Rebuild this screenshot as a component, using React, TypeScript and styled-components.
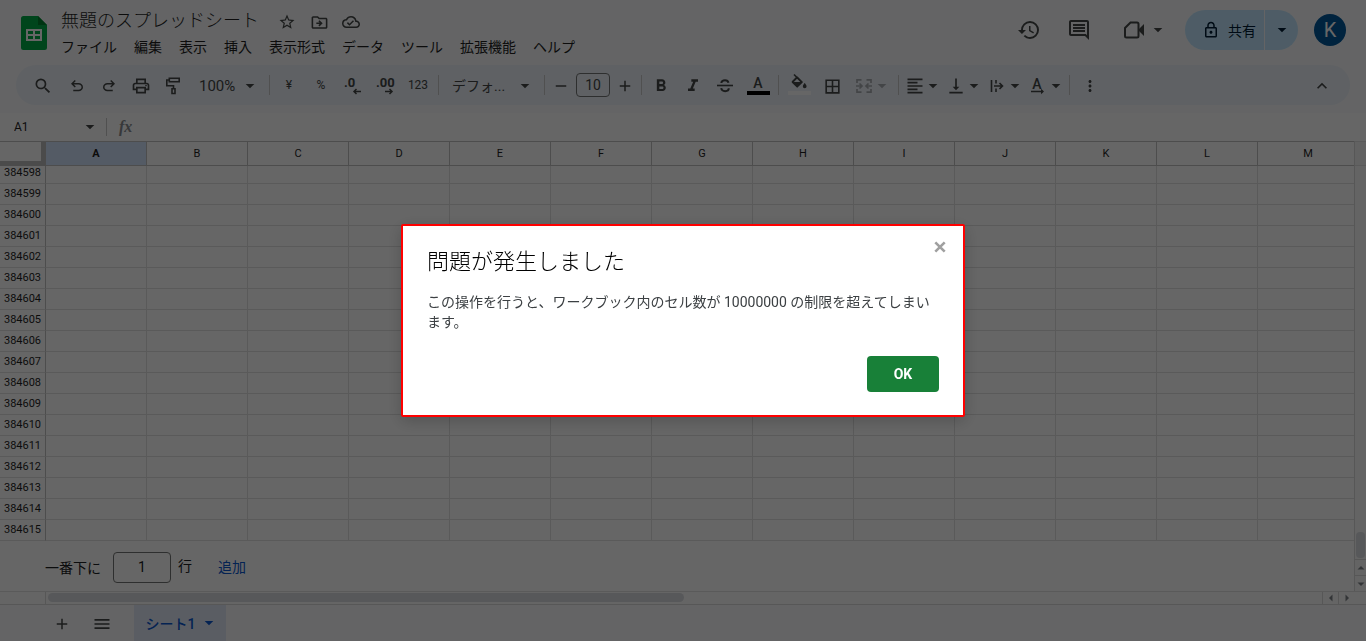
import React from "react";
import styled, { createGlobalStyle } from "styled-components";
import {
  MdStarOutline,
  MdOutlineDriveFileMove,
  MdOutlineCloudDone,
  MdHistory,
  MdOutlineComment,
  MdOutlineLock,
  MdSearch,
  MdOutlinePrint,
  MdFormatBold,
  MdFormatItalic,
  MdBorderAll,
  MdFormatAlignLeft,
  MdVerticalAlignBottom,
  MdMoreVert,
  MdExpandLess,
  MdMenu,
  MdAdd,
  MdRemove,
} from "react-icons/md";

const SANS = `Roboto, "Noto Sans CJK JP", sans-serif`;

const GlobalStyle = createGlobalStyle`
  *, *::before, *::after { box-sizing: border-box; }
  body { margin: 0; background: #f9fbfd; font-family: ${SANS}; font-size: 14px; color: #1f1f1f; }
  button, input, select { font: inherit; color: inherit; margin: 0; }
  svg { display: block; flex: none; }
`;

const Page = styled.div`
  display: flex;
  flex-direction: column;
  min-height: 100vh;
`;

const PlainButton = styled.button`
  display: flex;
  align-items: center;
  justify-content: center;
  border: 0;
  padding: 0;
  background: none;
  cursor: pointer;
`;

/* ---------- Title bar ---------- */

const TitleBar = styled.header`
  display: flex;
  height: 65px;
  padding: 0 20px;
`;

const Logo = styled.a`
  margin-top: 16px;
  width: 28px;
`;

const TitleBlock = styled.div`
  flex: 1;
  min-width: 0;
  padding: 7px 0 0 13px;
`;

const TitleRow = styled.div`
  display: flex;
  align-items: center;
  height: 26px;
`;

const TitleInput = styled.input`
  width: 210px;
  height: 26px;
  padding: 0 0 2px;
  border: 0;
  background: none;
  font-size: 18px;
  font-weight: 300;
  outline: 0;
`;

const TitleIcon = styled(PlainButton)`
  width: 32px;
  height: 26px;
  padding-top: 4px;
  color: #444746;
`;

const MenuBar = styled.nav`
  display: flex;
  gap: 17px;
  height: 26px;
`;

const MenuItem = styled(PlainButton)`
  white-space: nowrap;
`;

const HeaderTools = styled.div`
  display: flex;
  align-items: center;
  height: 60px;
  color: #444746;
`;

const HeaderButton = styled(PlainButton)<{ $width: number }>`
  width: ${(p) => p.$width}px;
  height: 40px;
`;

const CallButton = styled(HeaderButton)`
  gap: 4px;
  padding-left: 10px;
`;

const Share = styled.div`
  display: flex;
  gap: 1px;
  height: 40px;
  margin: 0 16px 0 11px;
  border-radius: 20px;
  overflow: hidden;
  color: #001d35;
`;

const ShareButton = styled(PlainButton)`
  gap: 8px;
  width: 79px;
  padding-left: 9px;
  background: #c2e7ff;
`;

const ShareMenu = styled(PlainButton)`
  width: 33px;
  background: #c2e7ff;
`;

const Avatar = styled(PlainButton)`
  width: 32px;
  height: 32px;
  border-radius: 50%;
  background: #01579b;
  color: #fff;
  font-size: 20px;
`;

/* ---------- Toolbar ---------- */

const Toolbar = styled.div`
  display: flex;
  align-items: center;
  height: 40px;
  margin: 0 16px 8px;
  padding: 0 12px 0 9px;
  border-radius: 20px;
  background: #edf2fa;
  color: #444746;
`;

const Tool = styled(PlainButton)<{ $width?: number; $dim?: boolean }>`
  width: ${(p) => p.$width ?? 32}px;
  height: 32px;
  padding-top: 2px;
  opacity: ${(p) => (p.$dim ? 0.4 : 1)};
`;

const TextTool = styled(Tool)`
  padding: 0;
  font-size: 12px;
`;

const Divider = styled.span`
  width: 1px;
  height: 20px;
  margin: 0 3px;
  background: #c7c7c7;
`;

const Picker = styled.label<{ $width: number; $size: number }>`
  display: flex;
  align-items: center;
  width: ${(p) => p.$width}px;
  height: 32px;
  padding: 1px 8px 0 10px;
  font-size: ${(p) => p.$size}px;

  select {
    flex: 1;
    min-width: 0;
    appearance: none;
    border: 0;
    padding: 0;
    background: none;
  }
`;

const SizeInput = styled.input`
  width: 34px;
  height: 24px;
  margin: 0 2px;
  padding: 0;
  border: 1px solid #747775;
  border-radius: 4px;
  background: none;
  text-align: center;
`;

const SwatchTool = styled(PlainButton)<{ $bar: string }>`
  flex-direction: column;
  justify-content: flex-end;
  width: 34px;
  height: 32px;
  padding-bottom: 6px;

  &::after {
    content: "";
    width: 23px;
    height: 4px;
    background: ${(p) => p.$bar};
  }
`;

const SwatchLetter = styled.span`
  height: 15px;
  font-size: 14px;
  font-weight: 500;
  line-height: 14px;
`;

const Spacer = styled.span`
  flex: 1;
`;

/* ---------- Formula bar ---------- */

const FormulaBar = styled.div`
  display: flex;
  align-items: center;
  height: 28px;
  background: #fff;
`;

const NameBox = styled.input`
  width: 82px;
  padding: 0 0 0 14px;
  border: 0;
  background: none;
  font-size: 12px;
`;

const NameMenu = styled(PlainButton)`
  width: 16px;
  height: 24px;
  color: #444746;
`;

const FormulaLabel = styled.label`
  display: flex;
  align-items: center;
  flex: 1;
  margin-left: 8px;
  border-left: 1px solid #c7c7c7;
  padding-left: 12px;
  height: 18px;
  color: #8a8d91;
  font: italic 700 16px/18px "Liberation Serif", serif;
`;

const FormulaInput = styled.input`
  flex: 1;
  margin-left: 12px;
  border: 0;
  background: none;
`;

/* ---------- Sheet ---------- */

const SheetArea = styled.main`
  display: flex;
  flex: 1;
  background: #fff;
`;

const Viewport = styled.div`
  flex: 1;
  min-width: 0;
  overflow: hidden;
`;

const Grid = styled.table`
  table-layout: fixed;
  width: 1359px;
  border-collapse: separate;
  border-spacing: 0;
  border-top: 1px solid #c0c0c0;
  font-size: 11px;
  line-height: 14px;
`;

const RowCol = styled.col`
  width: 46px;
`;

const DataCol = styled.col`
  width: 101px;
`;

const Corner = styled.td`
  height: 24px;
  padding: 0;
  background: #fff;
  border: solid #bcbcbc;
  border-width: 0 5px 5px 0;
`;

const ColumnHead = styled.th<{ $active: boolean }>`
  height: 24px;
  padding: 0;
  border: solid #c0c0c0;
  border-width: 0 1px 1px 0;
  background: ${(p) => (p.$active ? "#d3e3fd" : "#fff")};
  font-weight: ${(p) => (p.$active ? 700 : 400)};
`;

const RowHead = styled.th`
  padding: 0 0 3px;
  border: solid #c0c0c0;
  border-width: 0 1px 1px 0;
  border-bottom-color: #e1e1e1;
  font-weight: 400;
  vertical-align: bottom;
`;

const Cell = styled.td`
  padding: 0;
  border: solid #e1e1e1;
  border-width: 0 1px 1px 0;
`;

const Row = styled.tr<{ $clipped: boolean }>`
  height: ${(p) => (p.$clipped ? 17 : 21)}px;
`;

const AddRows = styled.form`
  display: flex;
  align-items: center;
  height: 50px;
  padding: 2px 0 0 45px;
  color: #202124;

  label {
    display: flex;
    align-items: center;
    gap: 12px;
  }
`;

const RowCount = styled.input`
  width: 58px;
  height: 31px;
  border: 1px solid #747775;
  border-radius: 4px;
  background: none;
  text-align: center;
`;

const Unit = styled.span`
  margin: 0 26px 4px 7px;
`;

const AddButton = styled(PlainButton)`
  padding-bottom: 2px;
  color: #0b57d0;
`;

const VerticalScroll = styled.div`
  display: flex;
  flex-direction: column;
  width: 12px;
  border-left: 1px solid #dadada;
  background: #fafafa;
`;

const ScrollTop = styled.div`
  height: 25px;
  border: solid #e1e1e1;
  border-width: 1px 0;
  background: #f4f4f4;
`;

const VerticalThumb = styled.div`
  height: 26px;
  margin: auto 1px 1px;
  border-radius: 4px;
  background: #dadce0;
`;

const ScrollArrow = styled(PlainButton)<{ $side: "top" | "left" }>`
  width: ${(p) => (p.$side === "top" ? "auto" : "16px")};
  height: ${(p) => (p.$side === "top" ? "16px" : "auto")};
  border-${(p) => p.$side}: 1px solid #dadada;
  color: #80868b;
`;

const HorizontalScroll = styled.div`
  display: flex;
  height: 13px;
  padding-right: 12px;
  border-top: 1px solid #e1e1e1;
  background: #fdfdfd;
`;

const TrackStart = styled.div`
  width: 46px;
  border-right: 1px solid #dadada;
`;

const Track = styled.div`
  flex: 1;
  padding: 1px 2px;
`;

const HorizontalThumb = styled.div`
  width: 50%;
  height: 9px;
  border-radius: 5px;
  background: #dadce0;
`;

const TabBar = styled.footer`
  display: flex;
  height: 37px;
  padding-left: 42px;
  border-top: 1px solid #dadada;
  color: #444746;
`;

const TabTool = styled(PlainButton)`
  width: 40px;
  padding-top: 2px;
`;

const SheetTab = styled(PlainButton)`
  gap: 6px;
  width: 92px;
  margin-left: 12px;
  padding-left: 3px;
  background: #e1e9f7;
  color: #0b57d0;
  font-weight: 500;
`;

/* ---------- Error dialog ---------- */

const Scrim = styled.div`
  position: fixed;
  inset: 0;
  display: flex;
  align-items: center;
  justify-content: center;
  background: rgba(0, 0, 0, 0.6);
`;

const Dialog = styled.section`
  position: relative;
  width: 564px;
  max-width: 100%;
  padding: 24px 24px 23px;
  border: 2px solid #f00;
  border-radius: 2px;
  background: #fff;
  box-shadow: 0 4px 16px rgba(0, 0, 0, 0.2);
`;

const DialogTitle = styled.h1`
  margin: 0 0 18px;
  font-size: 22px;
  font-weight: 300;
  line-height: 24px;
  color: #000;
`;

const DialogText = styled.p`
  margin: 0 0 24px;
  font-size: 14px;
  line-height: 20px;
  color: #3c4043;
`;

const DialogActions = styled.div`
  display: flex;
  justify-content: flex-end;
`;

const OkButton = styled(PlainButton)`
  width: 72px;
  height: 36px;
  border-radius: 4px;
  background: #188038;
  color: #fff;
  font-weight: 700;
`;

const CloseButton = styled(PlainButton)`
  position: absolute;
  top: 11px;
  right: 12px;
  width: 22px;
  height: 20px;
`;

/* ---------- Drawings ---------- */

const Caret = () => (
  <svg width="16" height="16" viewBox="0 0 16 16" fill="currentColor" aria-hidden="true">
    <path d="M3.7 6h8.6L8 10.3z" />
  </svg>
);

const ARROWS = {
  up: "M1.5 6.5h7L5 3z",
  down: "M1.5 3.5h7L5 7z",
  left: "M6.5 1.5v7L3 5z",
  right: "M3.5 1.5v7L7 5z",
};

const SmallArrow = ({ dir }: { dir: keyof typeof ARROWS }) => (
  <svg width="10" height="10" viewBox="0 0 10 10" fill="currentColor" aria-hidden="true">
    <path d={ARROWS[dir]} />
  </svg>
);

const SheetsLogo = () => (
  <svg width="28" height="34" viewBox="0 0 28 34" aria-hidden="true">
    <path d="M3.5 0H18l9 9v22.5a2.5 2.500 0 0 1-2.5 2.5h-21A2.5 2.500 0 0 1 1 31.500v-29A2.5 2.500 0 0 1 3.500 0z" fill="#00ac47" />
    <path d="M18 0l9 9h-9z" fill="#00832d" />
    <path d="M6 13h16v12H6zM8 15v3h5v-3zM15 15v3h5v-3zM8 20v3h5v-3zM15 20v3h5v-3z" fill="#fff" fillRule="evenodd" />
  </svg>
);

const UNDO =
  "M7 19v-2h7.1q1.575 0 2.737-1T18 13.500 16.838 11 14.100 10H7.800l2.600 2.600L9 14 4 9l5-5 1.400 1.400L7.800 8h6.300q2.425 0 4.163 1.575T20 13.500t-1.737 3.925T14.100 19z";

const UndoIcon = () => (
  <svg width="18" height="18" viewBox="0 0 24 24" fill="currentColor" aria-hidden="true">
    <path d={UNDO} />
  </svg>
);

const RedoIcon = () => (
  <svg width="18" height="18" viewBox="0 0 24 24" fill="currentColor" aria-hidden="true">
    <g transform="matrix(-1 0 0 1 24 0)">
      <path d={UNDO} />
    </g>
  </svg>
);

const PaintIcon = () => (
  <svg width="16" height="18" viewBox="0 0 16 18" fill="none" stroke="currentColor" strokeWidth="1.6" aria-hidden="true">
    <path d="M4.300 1.300h9.900v3.400H4.300zM4.300 3H1.800v5.700h6.700v3M7 11.800h3v4.700H7z" />
  </svg>
);

const DecimalIcon = ({ label, more }: { label: string; more?: boolean }) => (
  <svg width="20" height="20" viewBox="0 0 20 20" aria-hidden="true">
    <text x="1" y="11" fontSize="13" fontWeight="700" fill="currentColor">
      {label}
    </text>
    <path
      d={more ? "M10 15.500h7M14.500 13l2.500 2.500-2.500 2.500" : "M18 15.500h-7M13.500 13L11 15.500l2.500 2.500"}
      fill="none"
      stroke="currentColor"
      strokeWidth="1.5"
    />
  </svg>
);

const StrikeIcon = () => (
  <svg width="18" height="18" viewBox="0 0 18 18" fill="none" stroke="currentColor" aria-hidden="true">
    <path d="M1 8.500h16" strokeWidth="1.600" />
    <path d="M12.500 5.800C12.200 4.200 11 3.200 9 3.200S5.500 4.200 5.300 6M5.200 11.200c.3 2 1.700 3 3.900 3s3.700-1 3.700-2.900" strokeWidth="1.900" />
  </svg>
);

const FillIcon = () => (
  <svg width="18" height="18" viewBox="0 0 18 18" aria-hidden="true">
    <path d="M4 1.500l8 8M7 4.200L2.200 9" fill="none" stroke="currentColor" strokeWidth="1.600" />
    <path d="M7.200 4.400l4.700 4.700-4.700 4.700L2.500 9.100z" fill="none" stroke="currentColor" strokeWidth="1.600" strokeLinejoin="round" />
    <path d="M2.500 9h9.600l-4.900 4.900z" fill="currentColor" />
    <path d="M14.700 10s1.900 2.100 1.900 3.300a1.900 1.900 0 0 1-3.800 0c0-1.200 1.900-3.300 1.900-3.300z" fill="currentColor" />
  </svg>
);

const MergeIcon = () => (
  <svg width="20" height="20" viewBox="0 0 20 20" fill="none" stroke="currentColor" strokeWidth="1.7" aria-hidden="true">
    <path d="M7.500 3.800H3V7M3 13v3.200h4.500M12.500 3.800H17V7M17 13v3.200h-4.500M2 10h5.500M5.500 7.500L8 10l-2.500 2.500M18 10h-5.500M14.500 7.500L12 10l2.500 2.500" />
  </svg>
);

const OverflowIcon = () => (
  <svg width="20" height="20" viewBox="0 0 20 20" fill="none" stroke="currentColor" strokeWidth="1.6" aria-hidden="true">
    <path d="M4.500 4v12M9 4v3.500M9 12.500V16M7 10h8.500M12.500 7l3 3-3 3" />
  </svg>
);

const RotateIcon = () => (
  <svg width="20" height="20" viewBox="0 0 20 20" aria-hidden="true">
    <text x="9" y="13" fontSize="14" fontWeight="500" textAnchor="middle" fill="currentColor">
      A
    </text>
    <path d="M3 15.500h12" fill="none" stroke="currentColor" strokeWidth="1.500" />
    <path d="M13 12.800l3 2.700-3 2.700z" fill="currentColor" />
  </svg>
);

const VideoIcon = () => (
  <svg width="24" height="24" viewBox="0 0 24 24" aria-hidden="true">
    <path d="M8.500 4.500H15a1.500 1.500 0 0 1 1.500 1.500v12a1.500 1.500 0 0 1-1.500 1.500H4.500A1.500 1.500 0 0 1 3 18v-8z" fill="none" stroke="currentColor" strokeWidth="2" />
    <path d="M17 11l5-5v12l-5-5z" fill="currentColor" />
  </svg>
);

const CloseIcon = () => (
  <svg width="12" height="12" viewBox="0 0 12 12" fill="none" stroke="#a0a0a0" strokeWidth="2.600" aria-hidden="true">
    <path d="M1.300 1.300l9.400 9.400M10.700 1.300l-9.400 9.400" />
  </svg>
);

/* ---------- Data ---------- */

const MENUS = ["ファイル", "編集", "表示", "挿入", "表示形式", "データ", "ツール", "拡張機能", "ヘルプ"];
const COLUMNS = "ABCDEFGHIJKLM".split("");
const FIRST_ROW = 384598;
const ROWS = Array.from({ length: 18 }, (_, i) => FIRST_ROW + i);

export default function App() {
  return (
    <Page>
      <GlobalStyle />
      <TitleBar>
        <Logo href="#" aria-label="スプレッドシート ホーム">
          <SheetsLogo />
        </Logo>
        <TitleBlock>
          <TitleRow>
            <TitleInput aria-label="名前を変更" defaultValue="無題のスプレッドシート" />
            <TitleIcon aria-label="スター"><MdStarOutline size={18} /></TitleIcon>
            <TitleIcon aria-label="移動"><MdOutlineDriveFileMove size={19} /></TitleIcon>
            <TitleIcon aria-label="ドキュメントのステータス"><MdOutlineCloudDone size={18} /></TitleIcon>
          </TitleRow>
          <MenuBar>
            {MENUS.map((m) => (
              <MenuItem key={m}>{m}</MenuItem>
            ))}
          </MenuBar>
        </TitleBlock>
        <HeaderTools>
          <HeaderButton $width={50} aria-label="変更履歴"><MdHistory size={24} /></HeaderButton>
          <HeaderButton $width={50} aria-label="コメント"><MdOutlineComment size={24} /></HeaderButton>
          <CallButton $width={70} aria-label="通話">
            <VideoIcon />
            <Caret />
          </CallButton>
          <Share>
            <ShareButton>
              <MdOutlineLock size={18} />
              共有
            </ShareButton>
            <ShareMenu aria-label="共有オプション"><Caret /></ShareMenu>
          </Share>
          <Avatar>K</Avatar>
        </HeaderTools>
      </TitleBar>

      <Toolbar role="toolbar">
        <Tool $width={36} aria-label="検索"><MdSearch size={20} /></Tool>
        <Tool aria-label="元に戻す"><UndoIcon /></Tool>
        <Tool aria-label="やり直し"><RedoIcon /></Tool>
        <Tool aria-label="印刷"><MdOutlinePrint size={20} /></Tool>
        <Tool aria-label="書式を貼り付け"><PaintIcon /></Tool>
        <Picker $width={77} $size={15}>
          <select aria-label="ズーム"><option>100%</option></select>
          <Caret />
        </Picker>
        <Divider />
        <TextTool>¥</TextTool>
        <TextTool>%</TextTool>
        <Tool aria-label="小数点以下の桁数を減らす"><DecimalIcon label=".0" /></Tool>
        <Tool aria-label="小数点以下の桁数を増やす"><DecimalIcon label=".00" more /></Tool>
        <TextTool $width={34}>123</TextTool>
        <Divider />
        <Picker $width={99} $size={14}>
          <select aria-label="フォント"><option>デフォ...</option></select>
          <Caret />
        </Picker>
        <Divider />
        <Tool $width={26} aria-label="フォントサイズを縮小"><MdRemove size={18} /></Tool>
        <SizeInput aria-label="フォントサイズ" defaultValue="10" />
        <Tool $width={26} aria-label="フォントサイズを拡大"><MdAdd size={18} /></Tool>
        <Divider />
        <Tool aria-label="太字"><MdFormatBold size={20} /></Tool>
        <Tool aria-label="斜体"><MdFormatItalic size={20} /></Tool>
        <Tool aria-label="取り消し線"><StrikeIcon /></Tool>
        <SwatchTool $bar="#000" aria-label="テキストの色"><SwatchLetter>A</SwatchLetter></SwatchTool>
        <Divider />
        <SwatchTool $bar="#fff" aria-label="塗りつぶしの色"><FillIcon /></SwatchTool>
        <Tool aria-label="枠線"><MdBorderAll size={19} /></Tool>
        <Tool $width={47} $dim aria-label="セルを結合">
          <MergeIcon />
          <Caret />
        </Tool>
        <Divider />
        <Tool $width={41} aria-label="水平方向の配置"><MdFormatAlignLeft size={20} /><Caret /></Tool>
        <Tool $width={41} aria-label="垂直方向の配置"><MdVerticalAlignBottom size={20} /><Caret /></Tool>
        <Tool $width={41} aria-label="テキストを折り返す"><OverflowIcon /><Caret /></Tool>
        <Tool $width={41} aria-label="テキストの回転"><RotateIcon /><Caret /></Tool>
        <Divider />
        <Tool $width={34} aria-label="その他"><MdMoreVert size={18} /></Tool>
        <Spacer />
        <Tool aria-label="メニューを非表示"><MdExpandLess size={20} /></Tool>
      </Toolbar>

      <FormulaBar>
        <NameBox aria-label="名前ボックス" defaultValue="A1" />
        <NameMenu aria-label="名前付き範囲"><Caret /></NameMenu>
        <FormulaLabel>
          fx
          <FormulaInput />
        </FormulaLabel>
      </FormulaBar>

      <SheetArea>
        <Viewport>
          <Grid>
            <colgroup>
              <RowCol />
              {COLUMNS.map((c) => (
                <DataCol key={c} />
              ))}
            </colgroup>
            <thead>
              <tr>
                <Corner />
                {COLUMNS.map((c) => (
                  <ColumnHead key={c} scope="col" $active={c === "A"}>{c}</ColumnHead>
                ))}
              </tr>
            </thead>
            <tbody>
              {ROWS.map((r) => (
                <Row key={r} $clipped={r === FIRST_ROW}>
                  <RowHead scope="row">{r}</RowHead>
                  {COLUMNS.map((c) => (
                    <Cell key={c} />
                  ))}
                </Row>
              ))}
            </tbody>
          </Grid>
          <AddRows onSubmit={(e: React.FormEvent) => e.preventDefault()}>
            <label>
              一番下に
              <RowCount defaultValue="1" />
            </label>
            <Unit>行</Unit>
            <AddButton type="submit">追加</AddButton>
          </AddRows>
        </Viewport>
        <VerticalScroll>
          <ScrollTop />
          <VerticalThumb />
          <ScrollArrow $side="top" aria-label="上へ"><SmallArrow dir="up" /></ScrollArrow>
          <ScrollArrow $side="top" aria-label="下へ"><SmallArrow dir="down" /></ScrollArrow>
        </VerticalScroll>
      </SheetArea>
      <HorizontalScroll>
        <TrackStart />
        <Track><HorizontalThumb /></Track>
        <ScrollArrow $side="left" aria-label="左へ"><SmallArrow dir="left" /></ScrollArrow>
        <ScrollArrow $side="left" aria-label="右へ"><SmallArrow dir="right" /></ScrollArrow>
      </HorizontalScroll>
      <TabBar>
        <TabTool aria-label="シートを追加"><MdAdd size={18} /></TabTool>
        <TabTool aria-label="すべてのシート"><MdMenu size={20} /></TabTool>
        <SheetTab>
          シート1
          <Caret />
        </SheetTab>
      </TabBar>

      <Scrim>
        <Dialog role="alertdialog" aria-labelledby="error-title" aria-describedby="error-text">
          <DialogTitle id="error-title">問題が発生しました</DialogTitle>
          <DialogText id="error-text">
            この操作を行うと、ワークブック内のセル数が 10000000 の制限を超えてしまいます。
          </DialogText>
          <DialogActions>
            <OkButton>OK</OkButton>
          </DialogActions>
          <CloseButton aria-label="閉じる"><CloseIcon /></CloseButton>
        </Dialog>
      </Scrim>
    </Page>
  );
}
